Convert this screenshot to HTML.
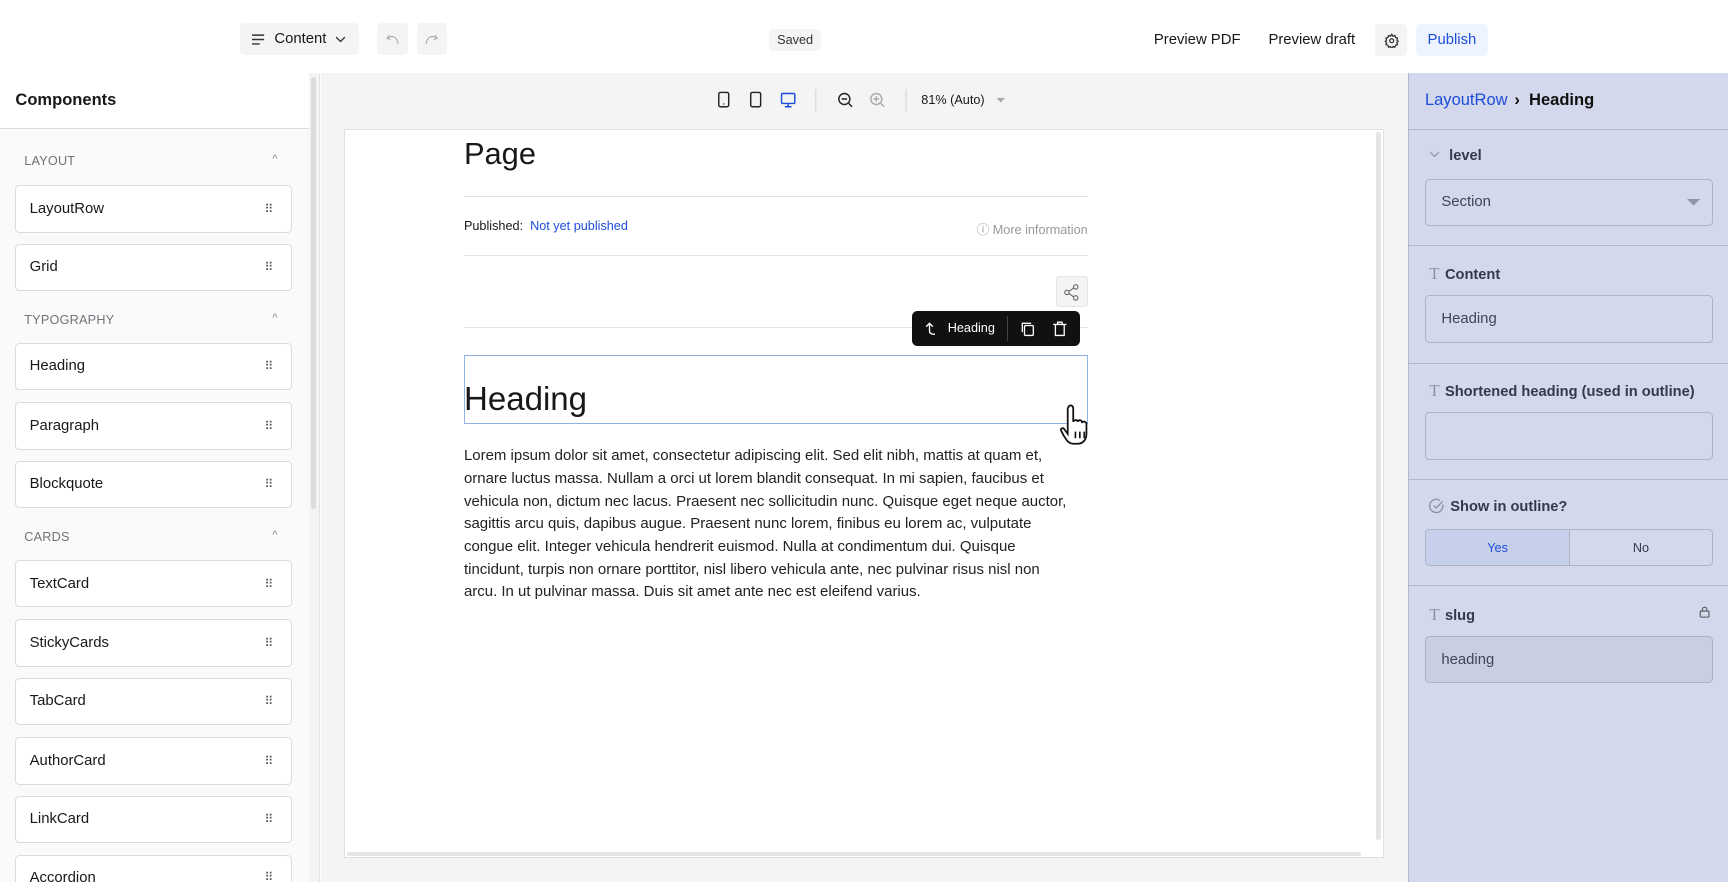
<!DOCTYPE html>
<html><head><meta charset="utf-8"><style>
html{zoom:1.10204;overflow:hidden}
*{box-sizing:border-box;margin:0;padding:0}
body{width:1568px;height:800px;overflow:hidden;position:relative;font-family:"Liberation Sans",sans-serif;color:#18181b;background:#fff;font-size:14px}
.abs{position:absolute}
.btn{position:absolute;background:#f4f4f5;border-radius:4px;display:flex;align-items:center;justify-content:center}
.item{position:absolute;left:14px;width:251px;height:43px;background:#fff;border:1px solid #dcdcdc;border-radius:4px;display:flex;align-items:center;padding-left:12px;font-size:13.5px}
.item::after{content:"⠿";position:absolute;right:16px;color:#555;font-size:11px}
.sec{position:absolute;left:22px;font-size:11.5px;color:#71717a;letter-spacing:.2px}
.car{position:absolute;left:247px;color:#888;font-size:10px}
.rp .lbl{position:absolute;left:1297px;font-size:13.3px;font-weight:bold;color:#333a4d}
.rp .in{position:absolute;left:1293px;width:261px;height:43px;border:1px solid #aeb4c8;border-radius:4px;display:flex;align-items:center;padding-left:14px;font-size:13.5px;color:#3f4558}
.hr{position:absolute;left:1278px;width:290px;height:1px;background:#b3b9cd}
.T{font-family:"Liberation Serif",serif;color:#8a90a2;font-weight:normal;margin-right:5px;font-size:15px}
</style></head><body>
<!-- top bar -->
<div class="btn" style="left:218px;top:21px;width:108px;height:29px;justify-content:flex-start;padding-left:11px;font-size:13.5px">
<svg width="12" height="10" viewBox="0 0 12 10" style="margin-right:8px"><path d="M0 1h11M0 5h11M0 9h7" stroke="#333" stroke-width="1.3"/></svg>Content<svg width="10" height="6" viewBox="0 0 10 6" style="margin-left:8px"><path d="M1 1l4 4 4-4" stroke="#333" fill="none" stroke-width="1.2"/></svg></div>
<div class="btn" style="left:342px;top:21px;width:28px;height:29px"><svg width="12" height="10" viewBox="0 0 12 10"><path d="M3 1L1 4l3 1M1 4c4-3 9-2 10 5" stroke="#aaa" fill="none"/></svg></div>
<div class="btn" style="left:378px;top:21px;width:28px;height:29px"><svg width="12" height="10" viewBox="0 0 12 10"><path d="M9 1l2 3-3 1M11 4C7 1 2 2 1 9" stroke="#aaa" fill="none"/></svg></div>
<div class="btn" style="left:698px;top:26px;width:47px;height:20px;font-size:11.5px;color:#333">Saved</div>
<div class="abs" style="left:1047px;top:29px;font-size:13.5px">Preview PDF</div>
<div class="abs" style="left:1151px;top:29px;font-size:13.5px">Preview draft</div>
<div class="btn" style="left:1248px;top:22px;width:29px;height:29px"><svg width="14" height="14" viewBox="0 0 24 24" fill="none" stroke="#333" stroke-width="2"><circle cx="12" cy="12" r="3"/><path d="M12 2l2 3 3-1 1 3 3 1-1 3 2 2-2 2 1 3-3 1-1 3-3-1-2 3-2-3-3 1-1-3-3-1 1-3-2-2 2-2-1-3 3-1 1-3 3 1z"/></svg></div>
<div class="btn" style="left:1285px;top:22px;width:65px;height:29px;background:#eef4ff;color:#1d4ed8;font-size:13.5px">Publish</div>

<!-- left sidebar -->
<div class="abs" style="left:0;top:66px;width:280px;height:760px;background:#fafafa"></div>
<div class="abs" style="left:0;top:66px;width:280px;height:51px;background:#fff;border-bottom:1px solid #dcdcdc"></div>
<div class="abs" style="left:14px;top:82px;font-size:15px;font-weight:bold">Components</div>
<div class="abs" style="left:280px;top:66px;width:10px;height:760px;background:#f4f4f4;border-right:1px solid #e2e2e2"></div>
<div class="abs" style="left:282px;top:70px;width:5px;height:392px;background:#dcdcdc;border-radius:3px"></div>
<div class="sec" style="top:140px">LAYOUT</div><div class="car" style="top:139px">^</div>
<div class="item" style="top:168px">LayoutRow</div>
<div class="item" style="top:221px">Grid</div>
<div class="sec" style="top:284px">TYPOGRAPHY</div><div class="car" style="top:283px">^</div>
<div class="item" style="top:311px">Heading</div>
<div class="item" style="top:365px">Paragraph</div>
<div class="item" style="top:418px">Blockquote</div>
<div class="sec" style="top:481px">CARDS</div><div class="car" style="top:480px">^</div>
<div class="item" style="top:508px">TextCard</div>
<div class="item" style="top:562px">StickyCards</div>
<div class="item" style="top:615px">TabCard</div>
<div class="item" style="top:669px">AuthorCard</div>
<div class="item" style="top:722px">LinkCard</div>
<div class="item" style="top:776px;align-items:flex-start;padding-top:13px">Accordion</div>

<!-- canvas -->
<div class="abs" style="left:291px;top:66px;width:987px;height:760px;background:#f4f4f4"></div>
<svg class="abs" style="left:645px;top:80px" width="280" height="22" viewBox="0 0 280 22" fill="none" stroke-width="1.3">
<rect x="7" y="4" width="9" height="13" rx="1.5" stroke="#222"/><circle cx="11.5" cy="14.5" r=".6" fill="#222"/>
<rect x="36" y="4" width="9" height="13" rx="1.5" stroke="#222"/>
<rect x="64" y="5" width="12" height="9" rx="1" stroke="#1d4ed8"/><path d="M70 14v3M67 17h6" stroke="#1d4ed8"/>
<path d="M95 1v20" stroke="#ddd"/>
<circle cx="121" cy="10" r="5" stroke="#222"/><path d="M118.5 10h5M125 14l3 3" stroke="#222"/>
<circle cx="150" cy="10" r="5" stroke="#aaa"/><path d="M147.5 10h5M150 7.5v5M154 14l3 3" stroke="#aaa"/>
<path d="M177 1v20" stroke="#ddd"/>
<path d="M259 9h8l-4 4z" fill="#aaa" stroke="none"/>
</svg>
<div class="abs" style="left:836px;top:84px;font-size:11.5px">81% (Auto)</div>
<div class="abs" style="left:312px;top:117px;width:944px;height:662px;background:#fff;border:1px solid #e0e0e0"></div>
<div class="abs" style="left:1249px;top:120px;width:4px;height:642px;background:#e4e4e4;border-radius:2px"></div>
<div class="abs" style="left:315px;top:773px;width:920px;height:4px;background:#e4e4e4;border-radius:2px"></div>

<div class="abs" style="left:421px;top:123px;font-size:28px">Page</div>
<div class="abs" style="left:421px;top:178px;width:566px;height:1px;background:#e4e4e4"></div>
<div class="abs" style="left:421px;top:199px;font-size:11.5px">Published:&nbsp; <span style="color:#1d4ed8">Not yet published</span></div>
<div class="abs" style="left:787px;width:200px;text-align:right;top:199px;font-size:11.5px;color:#999">ⓘ More information</div>
<div class="abs" style="left:421px;top:231px;width:566px;height:1px;background:#e4e4e4"></div>
<div class="abs" style="left:958px;top:250px;width:29px;height:29px;background:#f4f4f5;border:1px solid #e4e4e4;border-radius:3px"><svg width="27" height="27" viewBox="0 0 27 27" fill="none" stroke="#666"><circle cx="9" cy="14" r="2"/><circle cx="17" cy="9" r="2"/><circle cx="17" cy="19" r="2"/><path d="M11 13l4-3M11 15l4 3"/></svg></div>
<div class="abs" style="left:421px;top:297px;width:566px;height:1px;background:#e4e4e4"></div>
<div class="abs" style="left:828px;top:282px;width:152px;height:32px;background:#111;border-radius:5px;color:#fff;font-size:11.5px">
<svg class="abs" style="left:10px;top:8px" width="14" height="16" viewBox="0 0 14 16" fill="none" stroke="#fff" stroke-width="1.2"><path d="M2 6l3-3 3 3M5 3v7c0 2 2 3 5 3"/></svg>
<span class="abs" style="left:32px;top:9px">Heading</span>
<div class="abs" style="left:86px;top:5px;width:1px;height:22px;background:#444"></div>
<svg class="abs" style="left:97px;top:8px" width="16" height="16" viewBox="0 0 16 16" fill="none" stroke="#fff" stroke-width="1.2"><rect x="5" y="5" width="8" height="9" rx="1"/><path d="M3 11V3h8"/></svg>
<svg class="abs" style="left:126px;top:8px" width="16" height="16" viewBox="0 0 16 16" fill="none" stroke="#fff" stroke-width="1.2"><path d="M2 4h12M6 4V2h4v2M4 4v10h8V4"/></svg>
</div>
<div class="abs" style="left:421px;top:322px;width:566px;height:63px;border:1px solid #8fb3e0"></div>
<div class="abs" style="left:421px;top:346px;font-size:30px">Heading</div>
<svg class="abs" style="left:962px;top:366px" width="36" height="40" viewBox="0 0 36 40"><path d="M8 3c2-2 4 0 4 2v12c1-2 4-2 4 0 1-2 4-2 4 1 1-2 4-1 4 1v9c0 5-3 9-8 9h-4c-4 0-6-3-9-8l-2-4c-1-2 2-3 3-1l3 4V5z" fill="#fff" stroke="#111" stroke-width="1.6"/><path d="M14 26v6M18 26v6M22 26v6" stroke="#111" stroke-width="1.5"/></svg>
<div class="abs" style="left:421px;top:404px;width:580px;font-size:13.6px;line-height:20.6px;color:#222">Lorem ipsum dolor sit amet, consectetur adipiscing elit. Sed elit nibh, mattis at quam et,<br>ornare luctus massa. Nullam a orci ut lorem blandit consequat. In mi sapien, faucibus et<br>vehicula non, dictum nec lacus. Praesent nec sollicitudin nunc. Quisque eget neque auctor,<br>sagittis arcu quis, dapibus augue. Praesent nunc lorem, finibus eu lorem ac, vulputate<br>congue elit. Integer vehicula hendrerit euismod. Nulla at condimentum dui. Quisque<br>tincidunt, turpis non ornare porttitor, nisl libero vehicula ante, nec pulvinar risus nisl non<br>arcu. In ut pulvinar massa. Duis sit amet ante nec est eleifend varius.</div>

<!-- right panel -->
<div class="rp">
<div class="abs" style="left:1278px;top:66px;width:290px;height:760px;background:#d3d8ec;border-left:1px solid #b3b9cd"></div>
<div class="abs" style="left:1293px;top:82px;font-size:15px;color:#1d4ed8">LayoutRow <span style="color:#111;font-weight:bold;margin-left:2px">›&nbsp; Heading</span></div>
<div class="hr" style="top:117px"></div>
<div class="lbl" style="top:134px"><svg width="10" height="6" viewBox="0 0 10 6" style="margin-right:8px;vertical-align:2px"><path d="M1 1l4 4 4-4" stroke="#8a90a2" fill="none"/></svg>level</div>
<div class="in" style="top:162px">Section<svg class="abs" style="right:10px;top:18px" width="12" height="7"><path d="M0 0h12L6 6z" fill="#9097a8"/></svg></div>
<div class="hr" style="top:222px"></div>
<div class="lbl" style="top:240px"><span class="T">T</span>Content</div>
<div class="in" style="top:268px">Heading</div>
<div class="hr" style="top:329px"></div>
<div class="lbl" style="top:346px"><span class="T">T</span>Shortened heading (used in outline)</div>
<div class="in" style="top:374px"></div>
<div class="hr" style="top:435px"></div>
<div class="lbl" style="top:452px"><svg width="14" height="14" viewBox="0 0 14 14" style="margin-right:5px;vertical-align:-2px" fill="none" stroke="#8a90a2" stroke-width="1.2"><path d="M12.5 6A6 6 0 1 1 10 2.2"/><path d="M4.5 7l2 2 6-6"/></svg>Show in outline?</div>
<div class="abs" style="left:1293px;top:480px;width:261px;height:34px;border:1px solid #aeb4c8;border-radius:4px;display:flex;font-size:11.5px;overflow:hidden">
<div style="width:131px;background:#c6d0ea;color:#1d4ed8;display:flex;align-items:center;justify-content:center;border-right:1px solid #aeb4c8">Yes</div>
<div style="flex:1;display:flex;align-items:center;justify-content:center;color:#333a4d">No</div></div>
<div class="hr" style="top:531px"></div>
<div class="lbl" style="top:549px"><span class="T">T</span>slug</div>
<svg class="abs" style="left:1541px;top:549px" width="12" height="12" viewBox="0 0 12 12" fill="none" stroke="#555"><rect x="2" y="5.5" width="8" height="5.5" rx="1"/><path d="M4 5.5V4a2 2 0 014 0v1.5"/></svg>
<div class="in" style="top:577px;background:#c9cfe3">heading</div>
</div>
</body></html>
